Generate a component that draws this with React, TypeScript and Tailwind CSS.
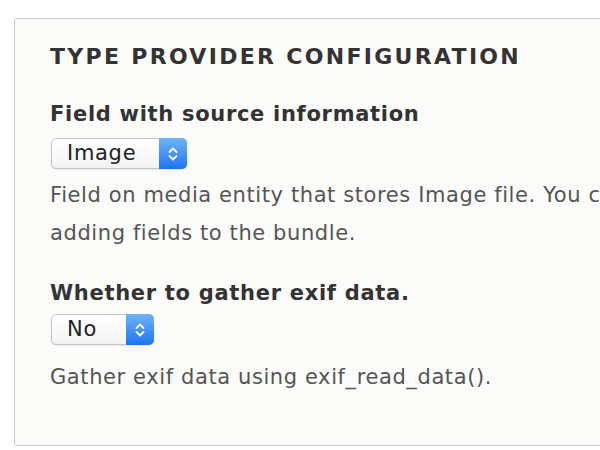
function Chevrons() {
  return (
    <svg width="12" height="18" viewBox="0 0 12 18" fill="none">
      <path d="M2.5 7 L6 3.5 L9.5 7" stroke="white" strokeWidth="1.8" strokeLinecap="round" strokeLinejoin="round" />
      <path d="M2.5 11 L6 14.5 L9.5 11" stroke="white" strokeWidth="1.8" strokeLinecap="round" strokeLinejoin="round" />
    </svg>
  );
}

function FakeSelect({ value, width }: { value: string; width: string }) {
  return (
    <div
      className={`ml-px flex h-[31px] ${width} items-stretch rounded-[5px] border border-[#c4c4c4] bg-gradient-to-b from-white to-[#f3f3f3] shadow-[0_1px_1px_rgba(0,0,0,0.08)]`}
    >
      <span className="flex flex-1 items-center pl-[15px] text-[21px] leading-none tracking-[0.7px] text-[#222]">
        {value}
      </span>
      <span className="-my-px -mr-px flex w-[28px] items-center justify-center rounded-r-[5px] bg-gradient-to-b from-[#6db4fb] to-[#1a73ee]">
        <Chevrons />
      </span>
    </div>
  );
}

export default function App() {
  return (
    <div className="h-[450px] w-[600px] overflow-hidden bg-white pl-[14px] pt-[18px] font-['DejaVu_Sans',sans-serif]">
      <div className="h-[428px] w-[1800px] rounded-[3px] border border-[#c9c9c9] bg-[#fbfbf9] pl-[35px] pt-[24px]">
        <h2 className="text-[22px] font-bold uppercase leading-[28px] tracking-[2.3px] text-[#333]">
          Type provider configuration
        </h2>

        <div className="mt-[29px] text-[21px] font-bold leading-[28px] tracking-[0.7px] text-[#333]">
          Field with source information
        </div>
        <div className="mt-[10px]">
          <FakeSelect value="Image" width="w-[136px]" />
        </div>
        <div className="mt-[7px] whitespace-nowrap text-[21px] leading-[38px] tracking-[0.6px] text-[#555]">
          <div>
            Field on media entity that stores Image file. You can create a bundle without selecting a value for this dropdown initially. This dropdown can be populated after
          </div>
          <div>adding fields to the bundle.</div>
        </div>

        <div className="mt-[27px] text-[21px] font-bold leading-[28px] tracking-[0.7px] text-[#333]">
          Whether to gather exif data.
        </div>
        <div className="mt-[7px]">
          <FakeSelect value="No" width="w-[103px]" />
        </div>
        <div className="mt-[13px] whitespace-nowrap text-[21px] leading-[38px] tracking-[0.6px] text-[#555]">
          Gather exif data using exif_read_data().
        </div>
      </div>
    </div>
  );
}
